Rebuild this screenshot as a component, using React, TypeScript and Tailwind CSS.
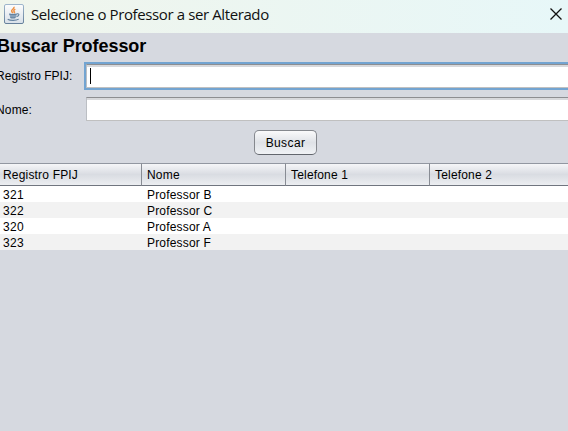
const columns = ['Registro FPIJ', 'Nome', 'Telefone 1', 'Telefone 2'];

const rows = [
  ['321', 'Professor B', '', ''],
  ['322', 'Professor C', '', ''],
  ['320', 'Professor A', '', ''],
  ['323', 'Professor F', '', ''],
];

function JavaIcon() {
  return (
    <svg width="20" height="20" viewBox="0 0 20 20" className="shrink-0">
      <defs>
        <linearGradient id="tile" x1="0" y1="0" x2="0" y2="1">
          <stop offset="0" stopColor="#fdfdfd" />
          <stop offset="1" stopColor="#d8e0e8" />
        </linearGradient>
        <linearGradient id="edge" x1="0" y1="0" x2="0" y2="1">
          <stop offset="0" stopColor="#9fb6cc" />
          <stop offset="1" stopColor="#66809b" />
        </linearGradient>
      </defs>
      <rect x="0.5" y="0.5" width="19" height="19" rx="1.5" fill="url(#tile)" stroke="url(#edge)" />
      <path d="M10 2.800c.8 2-3.200 2.900-2.300 4.600.3.700.9 1.100 1.300 1.500M11.300 5.200c-1.700 1.100-1.900 1.600-1 2.500.5.600.1 1-.4 1.400" fill="none" stroke="#ee9145" strokeWidth="1.500" />
      <path d="M5 9.800h7.800l-.5 2.200c-.3 1.400-1 1.900-2 1.900H7.800c-1.200 0-1.800-.6-2-1.900z" fill="#86a0ba" />
      <path d="M5.200 9.900c2 .7 5.600.7 7.600 0M6.300 13.500c1.500.6 3.700.6 5.200 0M12.900 9.900c2.800-.7 2.700 2-.4 2.700M3.700 15.200c2.500 1.600 8.500 1.500 11-.1" fill="none" stroke="#64829f" strokeWidth="1.100" />
    </svg>
  );
}

export default function App() {
  return (
    <div className="flex h-[431px] w-[568px] flex-col overflow-hidden bg-[#d6d9e0] font-['Liberation_Sans',Arial,sans-serif] text-xs text-black">
      <header className="flex h-[33px] shrink-0 items-start bg-linear-to-r from-[#f0f5ec] to-[#e7f7f8] pl-1 pt-1">
        <JavaIcon />
        <h1 className="ml-[7px] whitespace-nowrap font-['Open_Sans','Noto_Sans',sans-serif] text-[15px] leading-5 tracking-[-0.39px] text-[#111]">
          Selecione o Professor a ser Alterado
        </h1>
        <svg width="14" height="14" viewBox="0 0 14 14" className="ml-auto mr-[5px] mt-[3px]">
          <path d="M1.500 1.500l11 11M12.500 1.500l-11 11" stroke="#111" strokeWidth="1.300" fill="none" />
        </svg>
      </header>

      <h2 className="-ml-[3px] h-[28px] shrink-0 whitespace-nowrap pt-[3px] text-lg leading-5 font-bold tracking-[-0.05px]">Buscar Professor</h2>

      <div className="flex h-[29px] shrink-0 items-center">
        <label className="-ml-1 w-[88px] whitespace-nowrap pt-px tracking-[0.02px]">Registro FPIJ:</label>
        <div className="flex h-[28px] flex-1 border-y-2 border-l-2 border-[#73a4d1]">
          <div className="flex flex-1 items-start border-t border-b border-l border-t-[#8d8e91] border-b-[#c0c0c0] border-l-[#bcbfc4] bg-white pl-[3px] pt-[3px] shadow-[inset_0_2px_0_#d8d9dc]">
            <span className="h-4 w-px bg-black" />
          </div>
        </div>
      </div>

      <div className="mt-[7px] flex h-6 shrink-0 items-center">
        <label className="-ml-1 w-[90px] pt-px tracking-[0.15px]">Nome:</label>
        <div className="h-6 flex-1 border-t border-b border-l border-t-[#8d8e91] border-b-[#c0c0c0] border-l-[#bcbfc4] bg-white shadow-[inset_0_2px_0_#d8d9dc]" />
      </div>

      <div className="flex h-[42px] shrink-0 items-start pl-[254px] pt-[9px]">
        <button className="flex h-[25px] w-[63px] items-center justify-center rounded-[5px] border border-[#85888e] border-b-[#62666d] bg-linear-to-b from-[#fafafb] via-[#dfe2e7] to-[#f0f2f5] tracking-[0.4px]">
          Buscar
        </button>
      </div>

      <table className="w-[574px] shrink-0 table-fixed border-collapse text-left">
        <colgroup>
          <col className="w-[142px]" />
          <col className="w-[144px]" />
          <col className="w-[144px]" />
          <col className="w-[144px]" />
        </colgroup>
        <thead>
          <tr>
            {columns.map((name, i) => (
              <th key={name} className="p-0 font-normal">
                <div className={`flex h-[23px] items-center border-y border-r border-t-[#9297a1] border-r-[#888c94] border-b-[#70757f] bg-linear-to-b from-[#f5f6f8] via-[#d9dce2] to-[#eceef1] tracking-[0.18px] ${i === 0 ? 'pl-[3px]' : 'pl-[5px]'}`}>
                  {name}
                </div>
              </th>
            ))}
          </tr>
        </thead>
        <tbody>
          {rows.map((row) => (
            <tr key={row[0]} className="bg-white even:bg-[#f2f2f2]">
              {row.map((cell, i) => (
                <td key={i} className={`h-4 p-0 leading-4 ${i === 0 ? 'pl-[3px] tracking-[0.3px]' : 'pl-[5px] tracking-[0.18px]'}`}>
                  <div className="h-4 pt-px">{cell}</div>
                </td>
              ))}
            </tr>
          ))}
        </tbody>
      </table>
    </div>
  );
}
